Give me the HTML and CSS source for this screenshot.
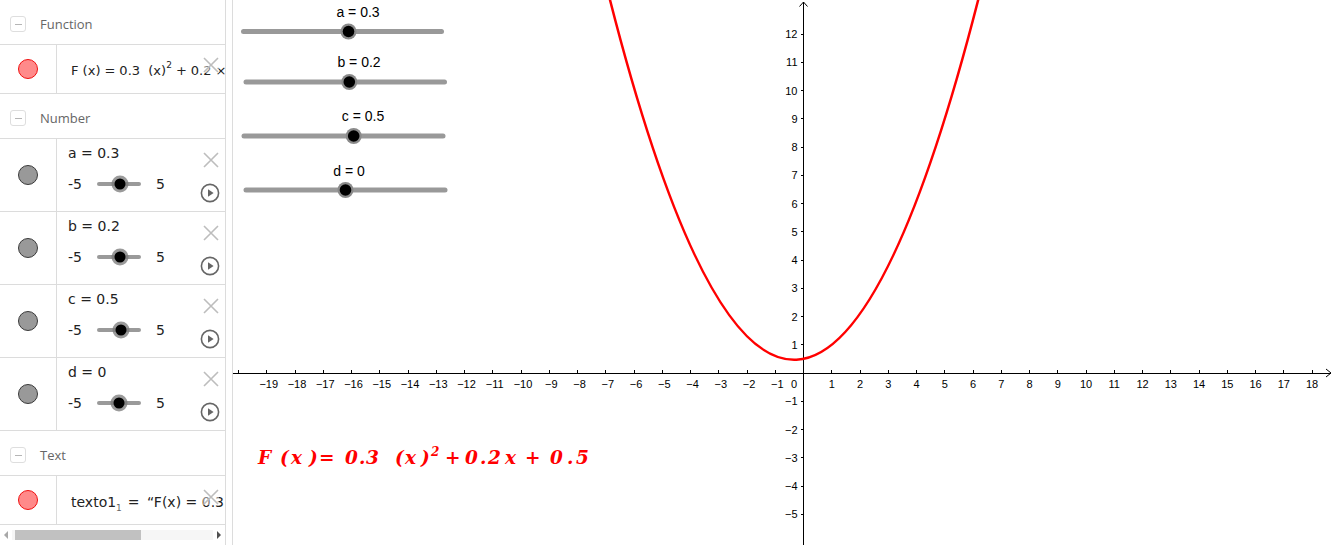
FILE: index.html
```html
<!DOCTYPE html>
<html>
<head>
<meta charset="utf-8">
<title>GeoGebra</title>
<link rel="stylesheet" href="styles.css">
</head>
<body>
<div class="app">
  <aside class="algebra">
    <div class="av-list">
      <div class="group-header"><span class="collapse"></span><span class="group-title">Function</span></div>
      <div class="item item-func">
        <div class="marble-col"><span class="marble marble-red"></span></div>
        <div class="item-body expr">F (x) <span class="op">=</span> 0.3&nbsp; (x)<sup>2</sup> <span class="op">+</span> 0.2 ×</div>
        <span class="del"><svg width="16" height="16" viewBox="0 0 16 16"><path d="M1 1L15 15M15 1L1 15"/></svg></span>
      </div>

      <div class="group-header"><span class="collapse"></span><span class="group-title">Number</span></div>
      <div class="item item-num">
        <div class="marble-col"><span class="marble marble-grey"></span></div>
        <div class="item-body num-body">
          <div class="num-name">a = 0.3</div>
          <div class="num-slider"><span class="lim">-5</span><span class="track"><span class="knob" style="left:53%"></span></span><span class="lim">5</span></div>
        </div>
        <span class="del"><svg width="16" height="16" viewBox="0 0 16 16"><path d="M1 1L15 15M15 1L1 15"/></svg></span>
        <span class="play"><svg width="20" height="20" viewBox="0 0 20 20"><circle cx="10" cy="10" r="8.6"/><path d="M8 6.2L13.6 10L8 13.8Z"/></svg></span>
      </div>
      <div class="item item-num">
        <div class="marble-col"><span class="marble marble-grey"></span></div>
        <div class="item-body num-body">
          <div class="num-name">b = 0.2</div>
          <div class="num-slider"><span class="lim">-5</span><span class="track"><span class="knob" style="left:52%"></span></span><span class="lim">5</span></div>
        </div>
        <span class="del"><svg width="16" height="16" viewBox="0 0 16 16"><path d="M1 1L15 15M15 1L1 15"/></svg></span>
        <span class="play"><svg width="20" height="20" viewBox="0 0 20 20"><circle cx="10" cy="10" r="8.6"/><path d="M8 6.2L13.6 10L8 13.8Z"/></svg></span>
      </div>
      <div class="item item-num">
        <div class="marble-col"><span class="marble marble-grey"></span></div>
        <div class="item-body num-body">
          <div class="num-name">c = 0.5</div>
          <div class="num-slider"><span class="lim">-5</span><span class="track"><span class="knob" style="left:55%"></span></span><span class="lim">5</span></div>
        </div>
        <span class="del"><svg width="16" height="16" viewBox="0 0 16 16"><path d="M1 1L15 15M15 1L1 15"/></svg></span>
        <span class="play"><svg width="20" height="20" viewBox="0 0 20 20"><circle cx="10" cy="10" r="8.6"/><path d="M8 6.2L13.6 10L8 13.8Z"/></svg></span>
      </div>
      <div class="item item-num">
        <div class="marble-col"><span class="marble marble-grey"></span></div>
        <div class="item-body num-body">
          <div class="num-name">d = 0</div>
          <div class="num-slider"><span class="lim">-5</span><span class="track"><span class="knob" style="left:50%"></span></span><span class="lim">5</span></div>
        </div>
        <span class="del"><svg width="16" height="16" viewBox="0 0 16 16"><path d="M1 1L15 15M15 1L1 15"/></svg></span>
        <span class="play"><svg width="20" height="20" viewBox="0 0 20 20"><circle cx="10" cy="10" r="8.6"/><path d="M8 6.2L13.6 10L8 13.8Z"/></svg></span>
      </div>

      <div class="group-header"><span class="collapse"></span><span class="group-title">Text</span></div>
      <div class="item item-text">
        <div class="marble-col"><span class="marble marble-red"></span></div>
        <div class="item-body expr text-expr">texto1<sub>1</sub> <span class="op">=</span> &nbsp;“F(x) = 0.3</div>
        <span class="del"><svg width="16" height="16" viewBox="0 0 16 16"><path d="M1 1L15 15M15 1L1 15"/></svg></span>
      </div>
    </div>
    <div class="hscroll">
      <span class="sb-arrow"><svg width="6" height="8" viewBox="0 0 6 8"><path class="arr-l" d="M5 0L1 4L5 8Z"/></svg></span>
      <span class="sb-track"><span class="sb-thumb"></span></span>
      <span class="sb-arrow"><svg width="6" height="8" viewBox="0 0 6 8"><path class="arr-r" d="M1 0L5 4L1 8Z"/></svg></span>
    </div>
  </aside>
  <div class="splitter"></div>
  <main class="graphics">
    <svg class="plot" width="1101" height="545" viewBox="233 0 1101 545">
      <!-- sliders -->
      <g class="gslider">
        <line class="gtrack" x1="243.5" y1="31.5" x2="441.5" y2="31.5"/>
        <circle class="ghalo" cx="348.5" cy="31.5" r="8"/>
        <circle class="gknob" cx="348.5" cy="31.5" r="5.8"/>
        <text class="glabel" x="358" y="16.5" text-anchor="middle">a = 0.3</text>
      </g>
      <g class="gslider">
        <line class="gtrack" x1="246" y1="82" x2="444.5" y2="82"/>
        <circle class="ghalo" cx="349.3" cy="82" r="8"/>
        <circle class="gknob" cx="349.3" cy="82" r="5.8"/>
        <text class="glabel" x="359" y="67" text-anchor="middle">b = 0.2</text>
      </g>
      <g class="gslider">
        <line class="gtrack" x1="244" y1="136" x2="443" y2="136"/>
        <circle class="ghalo" cx="353.7" cy="136" r="8"/>
        <circle class="gknob" cx="353.7" cy="136" r="5.8"/>
        <text class="glabel" x="363" y="121" text-anchor="middle">c = 0.5</text>
      </g>
      <g class="gslider">
        <line class="gtrack" x1="246" y1="190" x2="445" y2="190"/>
        <circle class="ghalo" cx="345.5" cy="190" r="8"/>
        <circle class="gknob" cx="345.5" cy="190" r="5.8"/>
        <text class="glabel" x="349" y="175.5" text-anchor="middle">d = 0</text>
      </g>

      <!-- axes -->
      <path class="axis" d="M233 373H1331M803.5 545V2"/>
      <path class="axis-arrow" d="M1326 369L1331 373L1326 377M799.5 6.5L803.5 2L807.5 6.5"/>
      <path class="ticks" d="M238.5 370V373M266.75 370V373M295 370V373M323.25 370V373M351.5 370V373M379.75 370V373M408 370V373M436.25 370V373M464.5 370V373M492.75 370V373M521 370V373M549.25 370V373M577.5 370V373M605.75 370V373M634 370V373M662.25 370V373M690.5 370V373M718.75 370V373M747 370V373M775.25 370V373M831.75 370V373M860 370V373M888.25 370V373M916.5 370V373M944.75 370V373M973 370V373M1001.25 370V373M1029.5 370V373M1057.75 370V373M1086 370V373M1114.25 370V373M1142.5 370V373M1170.75 370V373M1199 370V373M1227.25 370V373M1255.5 370V373M1283.75 370V373M1312 370V373M800.5 34H803.5M800.5 62.25H803.5M800.5 90.5H803.5M800.5 118.75H803.5M800.5 147H803.5M800.5 175.25H803.5M800.5 203.5H803.5M800.5 231.75H803.5M800.5 260H803.5M800.5 288.25H803.5M800.5 316.5H803.5M800.5 344.75H803.5M800.5 401.25H803.5M800.5 429.5H803.5M800.5 457.75H803.5M800.5 486H803.5M800.5 514.25H803.5"/>

      <g class="xlabels" text-anchor="middle">
        <text x="268.75" y="387.5">−19</text>
        <text x="297" y="387.5">−18</text>
        <text x="325.25" y="387.5">−17</text>
        <text x="353.5" y="387.5">−16</text>
        <text x="381.75" y="387.5">−15</text>
        <text x="410" y="387.5">−14</text>
        <text x="438.25" y="387.5">−13</text>
        <text x="466.5" y="387.5">−12</text>
        <text x="494.75" y="387.5">−11</text>
        <text x="523" y="387.5">−10</text>
        <text x="551.25" y="387.5">−9</text>
        <text x="579.5" y="387.5">−8</text>
        <text x="607.75" y="387.5">−7</text>
        <text x="636" y="387.5">−6</text>
        <text x="664.25" y="387.5">−5</text>
        <text x="692.5" y="387.5">−4</text>
        <text x="720.75" y="387.5">−3</text>
        <text x="749" y="387.5">−2</text>
        <text x="777.25" y="387.5">−1</text>
        <text x="794" y="387.5">0</text>
        <text x="831.75" y="387.5">1</text>
        <text x="860" y="387.5">2</text>
        <text x="888.25" y="387.5">3</text>
        <text x="916.5" y="387.5">4</text>
        <text x="944.75" y="387.5">5</text>
        <text x="973" y="387.5">6</text>
        <text x="1001.25" y="387.5">7</text>
        <text x="1029.5" y="387.5">8</text>
        <text x="1057.75" y="387.5">9</text>
        <text x="1086" y="387.5">10</text>
        <text x="1114.25" y="387.5">11</text>
        <text x="1142.5" y="387.5">12</text>
        <text x="1170.75" y="387.5">13</text>
        <text x="1199" y="387.5">14</text>
        <text x="1227.25" y="387.5">15</text>
        <text x="1255.5" y="387.5">16</text>
        <text x="1283.75" y="387.5">17</text>
        <text x="1312" y="387.5">18</text>
      </g>
      <g class="ylabels" text-anchor="end">
        <text x="797.5" y="38">12</text>
        <text x="797.5" y="66.25">11</text>
        <text x="797.5" y="94.5">10</text>
        <text x="797.5" y="122.75">9</text>
        <text x="797.5" y="151">8</text>
        <text x="797.5" y="179.25">7</text>
        <text x="797.5" y="207.5">6</text>
        <text x="797.5" y="235.75">5</text>
        <text x="797.5" y="264">4</text>
        <text x="797.5" y="292.25">3</text>
        <text x="797.5" y="320.5">2</text>
        <text x="797.5" y="348.75">1</text>
        <text x="797.5" y="405.25">−1</text>
        <text x="797.5" y="433.5">−2</text>
        <text x="797.5" y="461.75">−3</text>
        <text x="797.5" y="490">−4</text>
        <text x="797.5" y="518.25">−5</text>
      </g>

      <!-- F(x) = 0.3x^2 + 0.2x + 0.5 as exact quadratic Bezier -->
      <path class="curve" d="M605.75 -16.85Q796.44 745.9 987.13 -35.92"/>

      <text class="formula" y="463.5"><tspan x="258">F</tspan><tspan x="280">(</tspan><tspan x="291">x</tspan><tspan x="309">)</tspan><tspan class="fop" x="319">=</tspan><tspan x="345">0</tspan><tspan x="359">.</tspan><tspan x="366">3</tspan><tspan x="395">(</tspan><tspan x="405">x</tspan><tspan x="421">)</tspan><tspan class="fsup" x="431" y="456">2</tspan><tspan class="fop" x="445" y="463.5">+</tspan><tspan x="465">0</tspan><tspan x="480">.</tspan><tspan x="488">2</tspan><tspan x="505">x</tspan><tspan class="fop" x="525">+</tspan><tspan x="550">0</tspan><tspan x="567">.</tspan><tspan x="576">5</tspan></text>
    </svg>
  </main>
</div>
</body>
</html>
```

FILE: styles.css
```css
* { box-sizing: border-box; }
html, body {
  margin: 0;
  padding: 0;
  width: 1334px;
  height: 545px;
  overflow: hidden;
  background: #fff;
}
.app {
  display: flex;
  width: 1334px;
  height: 545px;
}

/* ---------- Algebra view ---------- */
.algebra {
  width: 226px;
  flex: none;
  border-right: 1px solid #dcdcdc;
  display: flex;
  flex-direction: column;
  font-family: "DejaVu Sans", sans-serif;
  color: #222;
}
.av-list {
  height: 525px;
  overflow: hidden;
}
.group-header {
  height: 45px;
  border-bottom: 1px solid #dcdcdc;
  display: flex;
  align-items: center;
  padding: 4px 0 0 10px;
}
.collapse {
  width: 16px;
  height: 16px;
  border: 1px solid #dedede;
  border-radius: 3px;
  display: flex;
  align-items: center;
  justify-content: center;
  margin-right: 14px;
}
.collapse::before {
  content: "";
  display: block;
  width: 7px;
  height: 1px;
  background: #b5b5b5;
}
.group-title {
  font-family: "Open Sans", sans-serif;
  font-size: 13px;
  color: #666;
}
.item {
  display: flex;
  border-bottom: 1px solid #dcdcdc;
  position: relative;
}
.item-func, .item-text { height: 49px; }
.item-num { height: 73px; }
.marble-col {
  width: 57px;
  flex: none;
  border-right: 1px solid #dcdcdc;
  display: flex;
  align-items: center;
  justify-content: center;
}
.marble {
  width: 20px;
  height: 20px;
  border-radius: 50%;
}
.marble-red { background: #ff8a8a; border: 1px solid #f01010; }
.marble-grey { background: #999; border: 1px solid #3a3a3a; }

.item-body {
  flex: 1;
  min-width: 0;
  overflow: hidden;
  white-space: nowrap;
}
.expr {
  display: flex;
  align-items: center;
  padding: 3px 0 0 14px;
  font-size: 13px;
  line-height: 16px;
}
.expr .op { margin: 0 4px; }
.expr sup { font-size: 9px; line-height: 9px; align-self: flex-start; margin-top: 13px; }
.text-expr { font-size: 14px; }
.text-expr sub { font-size: 9px; line-height: 9px; align-self: flex-end; margin-bottom: 11px; color: #666; }
.text-expr .op { margin: 0 3px 0 6px; }

.num-body {
  padding: 4px 0 0 11px;
  display: flex;
  flex-direction: column;
  font-size: 14px;
}
.num-name {
  height: 20px;
  line-height: 20px;
}
.num-slider {
  display: flex;
  align-items: center;
  height: 20px;
  margin-top: 11px;
}
.lim { width: 14px; }
.track {
  width: 44px;
  height: 4px;
  margin: 0 15px 0 15px;
  background: #9a9a9a;
  border-radius: 2px;
  position: relative;
}
.knob {
  position: absolute;
  top: 50%;
  width: 11px;
  height: 11px;
  border-radius: 50%;
  background: #000;
  box-shadow: 0 0 0 3px rgba(120, 120, 120, 0.75);
  transform: translate(-50%, -50%);
}
.del {
  position: absolute;
  left: 203px;
  top: 12px;
  width: 16px;
  height: 16px;
  background: rgba(255, 255, 255, 0.45);
}
.item-num .del { top: 13px; }
.item-text .del { top: 13px; }
.del svg { display: block; }
.del path { stroke: #bdbdbd; stroke-width: 1.6; fill: none; }
.play {
  position: absolute;
  left: 200px;
  top: 44px;
  width: 20px;
  height: 20px;
}
.play svg { display: block; }
.play circle { fill: none; stroke: #666; stroke-width: 1.6; }
.play path { fill: #666; }

.hscroll {
  height: 20px;
  display: flex;
  align-items: center;
}
.sb-arrow {
  width: 12px;
  height: 10px;
  flex: none;
  display: flex;
  align-items: center;
  justify-content: center;
}
.sb-arrow svg { display: block; }
.arr-l { fill: #a8a8a8; }
.arr-r { fill: #505050; }
.sb-track {
  flex: 1;
  height: 10px;
  background: #f6f6f6;
  display: flex;
}
.sb-thumb {
  width: 126px;
  height: 10px;
  margin-left: 3px;
  background: #c1c1c1;
}

.splitter {
  width: 7px;
  flex: none;
  border-right: 1px solid #dcdcdc;
}

/* ---------- Graphics view ---------- */
.graphics {
  flex: 1;
  height: 545px;
  overflow: hidden;
}
.plot { display: block; }
.gtrack { stroke: #999; stroke-width: 5; stroke-linecap: round; }
.ghalo { fill: #8a8a8a; }
.gknob { fill: #000; }
.glabel {
  font-family: "Liberation Sans", Arial, sans-serif;
  font-size: 14px;
  fill: #000;
}
.axis { stroke: #000; stroke-width: 1; fill: none; shape-rendering: crispEdges; }
.axis-arrow { stroke: #000; stroke-width: 1; fill: none; }
.ticks { stroke: #000; stroke-width: 1; fill: none; shape-rendering: crispEdges; }
.xlabels text, .ylabels text {
  font-family: "Liberation Sans", Arial, sans-serif;
  font-size: 11px;
  fill: #000;
}
.curve { stroke: #f00; stroke-width: 2.5; fill: none; }
.formula {
  font-family: "DejaVu Serif", "Liberation Serif", serif;
  font-weight: bold;
  font-style: italic;
  font-size: 18.5px;
  fill: #f00;
}
.fop { font-style: normal; }
.fsup { font-size: 12px; }
```
